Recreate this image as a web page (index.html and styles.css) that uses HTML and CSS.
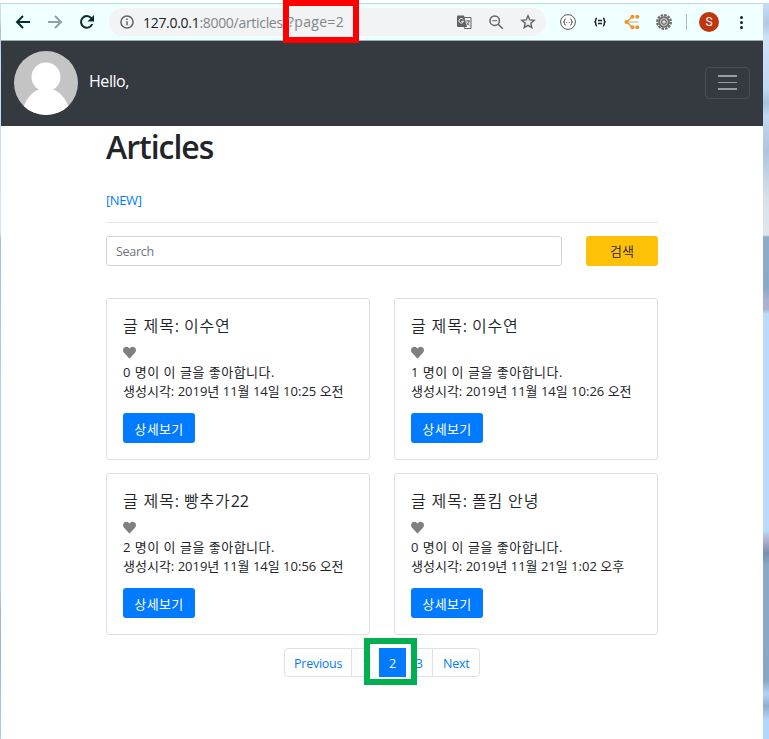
FILE: index.html
```html
<!DOCTYPE html>
<html lang="ko">
<head>
<meta charset="utf-8">
<title>Articles</title>
<link rel="stylesheet" href="styles.css">
</head>
<body>
<div class="window">
  <header class="toolbar">
    <svg class="tool back" viewBox="0 0 16 16"><path d="M15 8H2M8 2L2 8l6 6" /></svg>
    <svg class="tool forward" viewBox="0 0 16 16"><path d="M1 8h13M8 2l6 6-6 6" /></svg>
    <svg class="tool reload" viewBox="0 0 16 16"><path d="M13.2 10A5.8 5.8 0 1 1 12.3 4.2L14 6"/><path class="solid" d="M15 1v6.5H8.5z"/></svg>
    <div class="address">
      <svg class="info" viewBox="0 0 14 14"><circle cx="7" cy="7" r="6.1"/><path d="M7 6.2v4M7 3.6v1.5"/></svg>
      <span class="url"><b>127.0.0.1</b>:8000/articles/</span><span class="query">?page=2</span>
      <svg class="translate" viewBox="0 0 15 15"><path class="page" d="M6 2.5h8v11H7.5z"/><path class="fill" d="M1 .5h6L10 12H1a1 1 0 0 1-1-1v-9.500a1 1 0 0 1 1-1z"/><path class="g" d="M6.100 4.400A2.300 2.300 0 1 0 6.500 6.300H4.500"/><path class="page" d="M9 6h4M11 5v1M12.300 6c-.5 2-1.600 3.300-3 4.500M9.700 7.500l3 3"/></svg>
      <svg class="lens" viewBox="0 0 15 15"><circle cx="5.700" cy="5.700" r="4.700"/><path d="M9.200 9.200l4.600 4.600"/><path class="thin" d="M3.300 5.700h4.800"/></svg>
      <svg class="star" viewBox="0 0 16 16"><path d="M8 1.800l1.700 4.100 4.500.4-3.400 2.900 1 4.400L8 11.300l-3.800 2.300 1-4.400-3.400-2.900 4.500-.4z"/></svg>
    </div>
    <div class="extensions">
      <svg width="16" height="16" viewBox="0 0 16 16"><circle cx="8" cy="8" r="7.400" fill="#fff" stroke="#555"/><path d="M5.600 5Q4.500 5 4.500 6.500T3.500 8q1 0 1 1.500T5.600 11M10.400 5q1.100 0 1.100 1.500T12.500 8q-1 0-1 1.500T10.400 11" fill="none" stroke="#333"/><path d="M6 8.500h4" stroke="#999" stroke-dasharray="1 .5"/></svg>
      <svg width="14" height="10" viewBox="0 0 14 10"><path d="M4 1.300Q2.800 1.300 2.800 3T1.400 5q1.400 0 1.400 2T4 8.700M10 1.300q1.200 0 1.200 1.700T12.600 5q-1.400 0-1.400 2T10 8.700" fill="none" stroke="#222" stroke-width="1.500"/><path d="M5 3.500h4M5 6.500h4" stroke="#222" stroke-width="1.300"/></svg>
      <svg width="16" height="16" viewBox="0 0 16 16"><path d="M7.500 3.300L3 8l4.500 4.700" fill="none" stroke="#f79220" stroke-width="1.300"/><g fill="#f79220"><circle cx="2.600" cy="8" r="2.100"/><circle cx="8.500" cy="2.800" r="2"/><circle cx="13.200" cy="2.800" r="2"/><circle cx="8.500" cy="13.200" r="2"/><circle cx="13.200" cy="13.200" r="2"/></g><path d="M5 8h9.500" stroke="#b8ada2" stroke-width="1"/></svg>
      <svg width="16" height="16" viewBox="0 0 16 16"><circle cx="8" cy="8" r="6.800" fill="none" stroke="#666" stroke-width="2.200" stroke-dasharray="2.500 1.060"/><circle cx="8" cy="8" r="5" fill="#bbb" stroke="#666" stroke-width="1.600"/><circle cx="8" cy="8" r="2.300" fill="#ddd" stroke="#555"/></svg>
    </div>
    <span class="divider"></span>
    <span class="profile">S</span>
    <span class="more"><i></i><i></i><i></i></span>
    <span class="mark mark-url"></span>
  </header>
  <nav class="navbar">
    <svg class="avatar" viewBox="0 0 64 64"><defs><clipPath id="round"><circle cx="32" cy="32" r="32"/></clipPath></defs><g clip-path="url(#round)"><path fill="#c4c4c4" d="M0 0h64v64H0z"/><circle cx="32" cy="26" r="14.500" fill="#fff"/><path fill="#fff" d="M9 59c2-11 11-21 19-21h8c8 0 17 10 19 21v5H9z"/></g></svg>
    <span class="hello">Hello,</span>
    <button class="toggler" aria-label="Menu"><i></i><i></i><i></i></button>
  </nav>
  <main class="content">
    <h1>Articles</h1>
    <a class="new" href="#">[NEW]</a>
    <hr>
    <form class="search"><input type="text" placeholder="Search"><button type="button">검색</button></form>
    <section class="cards">
      <article class="card"><h2>글 제목<b>:</b> 이수연</h2><svg class="heart" viewBox="0 0 512 512"><path d="M462 62c-55-47-136-38-186 14l-20 20-20-20C186 24 105 15 50 62c-63 54-66 150-10 208l193 200c13 13 33 13 46 0l193-200c56-58 53-154-10-208z"/></svg><p class="likes">0 명이 이 글을 좋아합니다.</p><p class="date">생성시각: 2019년 11월 14일 10:25 오전</p><a class="detail" href="#">상세보기</a></article>
      <article class="card"><h2>글 제목<b>:</b> 이수연</h2><svg class="heart" viewBox="0 0 512 512"><path d="M462 62c-55-47-136-38-186 14l-20 20-20-20C186 24 105 15 50 62c-63 54-66 150-10 208l193 200c13 13 33 13 46 0l193-200c56-58 53-154-10-208z"/></svg><p class="likes">1 명이 이 글을 좋아합니다.</p><p class="date">생성시각: 2019년 11월 14일 10:26 오전</p><a class="detail" href="#">상세보기</a></article>
      <article class="card"><h2>글 제목<b>:</b> 빵추가<b>22</b></h2><svg class="heart" viewBox="0 0 512 512"><path d="M462 62c-55-47-136-38-186 14l-20 20-20-20C186 24 105 15 50 62c-63 54-66 150-10 208l193 200c13 13 33 13 46 0l193-200c56-58 53-154-10-208z"/></svg><p class="likes">2 명이 이 글을 좋아합니다.</p><p class="date">생성시각: 2019년 11월 14일 10:56 오전</p><a class="detail" href="#">상세보기</a></article>
      <article class="card"><h2>글 제목<b>:</b> 폴킴 안녕</h2><svg class="heart" viewBox="0 0 512 512"><path d="M462 62c-55-47-136-38-186 14l-20 20-20-20C186 24 105 15 50 62c-63 54-66 150-10 208l193 200c13 13 33 13 46 0l193-200c56-58 53-154-10-208z"/></svg><p class="likes">0 명이 이 글을 좋아합니다.</p><p class="date">생성시각: 2019년 11월 21일 1:02 오후</p><a class="detail" href="#">상세보기</a></article>
    </section>
    <div class="pagination">
      <a class="prev" href="#">Previous</a><a class="num" href="#">1</a><a class="num active" href="#">2</a><a class="num" href="#">3</a><a class="next" href="#">Next</a>
      <span class="mark mark-page"></span>
    </div>
  </main>
</div>
</body>
</html>
```

FILE: styles.css
```css
* { box-sizing: border-box; }
body {
  margin: 0;
  height: 739px;
  overflow: hidden;
  padding: 3px 6px 0 1px;
  font: 13px/19px "Open Sans", "Noto Sans CJK KR", sans-serif;
  color: #212529;
  background:
    linear-gradient(#fff, #fff) 0 0 / 100% 3px no-repeat,
    linear-gradient(#c5dcf3 20px, #b4bdd6 30px, #c5d9f0 60px, #d4e1f0 200px, #d4e1f0 234px, #9bc0e8 238px, #add2f8 400px, #add2f8 590px, #a5b4d8 610px, #a5b4d8 630px, #8fb6dd 650px, #a9cff5 739px) 0 0 / 1px 100% no-repeat,
    linear-gradient(#c5dcf3 4px, #b0cae6 24px, #cfe2f7 38px, #c1daf5 88px, #a9c3df 103px, #c1daf5 116px, #adc5de 150px, #d8e1ea 200px, #e0e6ed 235px, #8daccb 237px, #8aaac9 288px, #abafd0 300px, #abafd0 309px, #b9dcfe 314px, #b9dcfe 530px, #abafd0 541px, #7590ac 553px, #8baac9 566px, #88a7c7 680px, #b1d3f6 694px, #8eaecd 706px, #b3d7fb 720px);
}
a { color: #007bff; text-decoration: none; }
b { font-weight: 400; }
button, input { font: inherit; }
.window { height: 736px; background: #fff; }
.toolbar {
  position: relative;
  display: flex;
  align-items: center;
  height: 38px;
  background: #f0ffff;
  border-top: 1px solid #b5d9dc;
  border-bottom: 1px solid #a0adaf;
}
.tool { width: 16px; height: 16px; fill: none; stroke: #082c2c; stroke-width: 2; }
.back { margin-left: 14px; }
.forward { margin-left: 16px; stroke: #8ba3a3; }
.reload { margin-left: 16px; }
.tool .solid { fill: #082c2c; stroke: none; }
.address {
  display: flex;
  align-items: center;
  width: 437px;
  height: 28px;
  margin-left: 14px;
  padding-left: 11px;
  border-radius: 14px;
  background: #f1f3f4;
  font-size: 14px;
  color: #80868b;
  white-space: nowrap;
}
.address svg { fill: none; stroke: #5f6368; stroke-width: 1.5; flex: none; }
.info { width: 14px; height: 14px; }
.url { width: 144px; margin-left: 9px; letter-spacing: -.3px; }
.url b { color: #202124; }
.query { position: relative; z-index: 2; width: 56px; height: 30px; line-height: 30px; margin-left: 1px; letter-spacing: .3px; }
.address .translate { width: 15px; height: 15px; margin-left: 113px; stroke-width: 1; }
.translate .fill { fill: #5f6368; stroke: none; }
.translate .g { stroke: #fff; }
.address .lens { width: 15px; height: 15px; margin-left: 17px; }
.lens .thin { stroke-width: 1; }
.address .star { width: 16px; height: 16px; margin-left: 16px; stroke-width: 1.4; }
.extensions { display: flex; align-items: center; width: 115px; margin-left: 14px; }
.extensions svg { flex: none; }
.extensions svg:nth-child(2) { margin-left: 17px; }
.extensions svg:nth-child(3) { margin-left: 17px; }
.extensions svg:nth-child(4) { margin-left: 16px; }
.divider { width: 1px; height: 16px; background: #a9bdbd; margin-left: 11px; }
.profile { width: 20px; height: 20px; margin-left: 12px; border-radius: 50%; background: #bf360c; color: #fff; text-align: center; font: 12px/20px Roboto, sans-serif; }
.more { display: flex; flex-direction: column; gap: 2px; margin-left: 21px; }
.more i { width: 3px; height: 3px; border-radius: 50%; background: #082c2c; }
.mark { position: absolute; }
.mark-url { left: 282px; top: -4px; width: 76px; height: 43px; border: 6px solid #f00; z-index: 1; background: #f1f3f4; }
.navbar { display: flex; align-items: center; height: 85px; padding: 0 13px 2px; background: #343a40; color: #fff; }
.avatar { width: 64px; height: 64px; }
.hello { margin-left: 11px; font-size: 16px; letter-spacing: -.45px; transform: translateY(-1px); }
.toggler { display: flex; flex-direction: column; justify-content: center; align-items: center; gap: 5px; width: 45px; height: 32px; margin-left: auto; padding: 0; border: 1px solid #484e54; border-radius: 4px; background: none; }
.toggler i { width: 19px; height: 1.500px; background: #999c9f; }
.content { width: 552px; margin-left: 105px; }
h1 { margin: 0; height: 65px; font-size: 32px; line-height: 42px; font-weight: 600; letter-spacing: -1px; }
.new { display: block; height: 19px; letter-spacing: -.4px; }
hr { margin: 12px 0 13px; border: 0; border-top: 1px solid #e5e6e7; }
.search { display: flex; gap: 24px; margin: 0; }
.search input { width: 456px; height: 30px; padding: 0 9px; border: 1px solid #ced4da; border-radius: 3px; font-size: 12.500px; letter-spacing: -.3px; }
.search input::placeholder { color: #6c757d; opacity: 1; }
.search button { width: 72px; height: 30px; padding: 0; border: 0; border-radius: 3px; background: #ffc107; color: #212529; font-weight: 350; }
.cards { display: grid; grid-template-columns: 264px 264px; gap: 13px 24px; margin-top: 32px; }
.card { height: 162px; padding: 17px 16px; border: 1px solid #dfdfdf; border-radius: 3px; white-space: nowrap; }
.card h2 { margin: 0; height: 30px; font-size: 16px; line-height: 20px; font-weight: 350; letter-spacing: .85px; }
.card h2 b { letter-spacing: 0; }
.heart { display: block; width: 13px; height: 13px; margin-bottom: 4px; fill: gray; }
.card p { margin: 0; height: 19px; }
.card .likes { letter-spacing: .5px; }
.card .date { letter-spacing: 0; }
.detail { display: block; width: 72px; height: 30px; margin-top: 12px; border-radius: 3px; background: #007bff; color: #fff; text-align: center; line-height: 32px; letter-spacing: .4px; }
.pagination { position: relative; display: flex; width: 196px; height: 29px; margin: 13px 0 0 178px; border: 1px solid #dee2e6; border-radius: 4px; }
.pagination a { text-align: center; line-height: 29px; font-size: 12.500px; letter-spacing: -.25px; }
.pagination .prev { width: 68px; border-right: 1px solid #dee2e6; }
.pagination .num { width: 27px; }
.pagination .active { position: relative; z-index: 2; height: 29px; margin-top: -1px; line-height: 31px; background: #007bff; color: #fff; }
.pagination .next { width: 47px; border-left: 1px solid #dee2e6; }
.mark-page { left: 79px; top: -11px; width: 53px; height: 47px; border: 6px solid #00b050; background: #fff; }
```
